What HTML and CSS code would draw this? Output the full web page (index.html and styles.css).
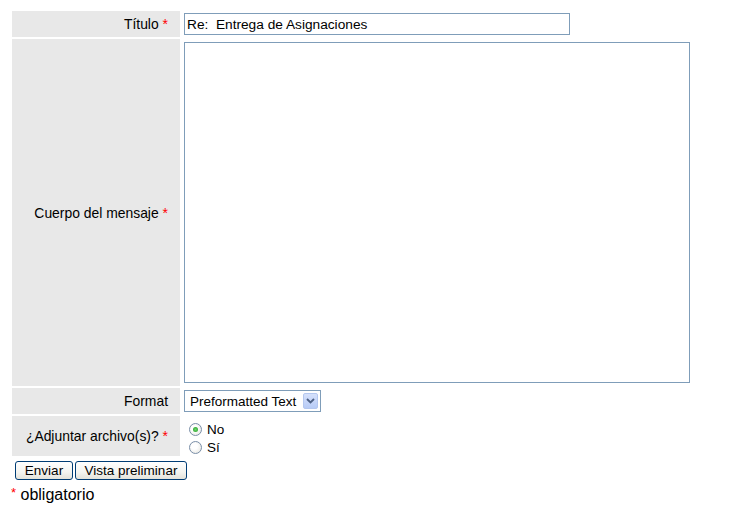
FILE: index.html
```html
<!DOCTYPE html>
<html>
<head>
<meta charset="utf-8">
<link rel="stylesheet" href="styles.css">
</head>
<body>
<table class="form">
  <tr class="row-title">
    <td class="label">Título <span class="req">*</span></td>
    <td class="field"><input class="text" type="text" value="Re:  Entrega de Asignaciones"></td>
  </tr>
  <tr>
    <td class="label">Cuerpo del mensaje <span class="req">*</span></td>
    <td class="field field-body"><textarea class="body"></textarea></td>
  </tr>
  <tr class="row-format">
    <td class="label">Format</td>
    <td class="field">
      <div class="select">
        <span class="select-text">Preformatted Text</span>
        <span class="select-btn">
          <svg width="9" height="6" viewBox="0 0 9 6"><path d="M1 1 L4.5 4.5 L8 1" fill="none" stroke="#4d6185" stroke-width="1.8"/></svg>
        </span>
      </div>
    </td>
  </tr>
  <tr class="row-attach">
    <td class="label">¿Adjuntar archivo(s)? <span class="req">*</span></td>
    <td class="field field-radios">
      <div class="radio-line first"><span class="radio checked"></span><span>No</span></div>
      <div class="radio-line"><span class="radio"></span><span>Sí</span></div>
    </td>
  </tr>
</table>
<div class="buttons">
  <button class="btn">Enviar</button><button class="btn">Vista preliminar</button>
</div>
<div class="legend"><span class="req small">*</span> obligatorio</div>
</body>
</html>
```

FILE: styles.css
```css
body {
  margin: 8px;
  font-family: "Liberation Sans", Arial, sans-serif;
  font-size: 13.5px;
  color: #000;
  background: #fff;
}
.form {
  border-collapse: separate;
  border-spacing: 2px;
  margin: 1px 0 0 2px;
}
.form td {
  padding: 0;
}
.label {
  width: 156px;
  background: #e8e8e8;
  text-align: right;
  padding-right: 12px !important;
  vertical-align: middle;
  height: 26px;
  color: #000;
  font-size: 13.9px;
}
.req {
  color: #f00;
  font-size: 14px;
}
.field {
  padding: 2px 0 2px 2px !important;
  vertical-align: top;
}
.text {
  display: block;
  box-sizing: border-box;
  width: 386px;
  height: 22px;
  margin: 0;
  border: 1px solid #7f9db9;
  padding: 0 2px;
  font-family: "Liberation Sans", Arial, sans-serif;
  font-size: 13.7px;
  color: #000;
  outline: none;
}
.field-body {
  padding: 3px 0 3px 2px !important;
}
.body {
  display: block;
  box-sizing: border-box;
  width: 506px;
  height: 341px;
  margin: 0;
  border: 1px solid #7f9db9;
  resize: none;
  outline: none;
}
.select {
  box-sizing: border-box;
  width: 137px;
  height: 22px;
  border: 1px solid #7f9db9;
  display: flex;
  align-items: center;
  justify-content: space-between;
  padding: 0 2px 0 5px;
  background: #fff;
  font-size: 13.5px;
}
.select-text {
  white-space: nowrap;
}
.select-btn {
  width: 15px;
  height: 16px;
  box-sizing: border-box;
  border: 1px solid #b4c7ef;
  border-radius: 2px;
  background: linear-gradient(#d6e1fb, #b7cbf6);
  display: flex;
  align-items: center;
  justify-content: center;
}
.field-radios {
  padding: 4px 0 0 7px !important;
  font-size: 13.5px;
}
.radio-line {
  display: flex;
  align-items: center;
  height: 17px;
}
.radio-line.first {
  height: 19px;
}
.radio {
  box-sizing: border-box;
  width: 13px;
  height: 13px;
  border: 1px solid #7a8ea8;
  border-radius: 50%;
  background: radial-gradient(circle at 40% 40%, #fff 30%, #e2e2dc 100%);
  margin-right: 5px;
  display: flex;
  align-items: center;
  justify-content: center;
}
.radio.checked::after {
  content: "";
  width: 5px;
  height: 5px;
  border-radius: 50%;
  background: radial-gradient(circle, #6ed66e, #1f9a1f);
}
.buttons {
  display: flex;
  gap: 2px;
  margin: 3px 0 0 7px;
}
.btn {
  box-sizing: border-box;
  height: 19px;
  margin: 0;
  border: 1px solid #003c74;
  border-radius: 3px;
  background: linear-gradient(#ffffff, #f4f4f0 60%, #e3e2da);
  font-family: "Liberation Sans", Arial, sans-serif;
  font-size: 13.5px;
  color: #000;
  padding: 0 4px;
  line-height: 17px;
}
.btn:first-child {
  width: 58px;
}
.btn:last-child {
  width: 112px;
}
.legend {
  margin: 4px 0 0 3px;
  font-size: 16px;
  line-height: 18px;
}
.req.small {
  font-size: 13px;
  vertical-align: 3px;
}
```
